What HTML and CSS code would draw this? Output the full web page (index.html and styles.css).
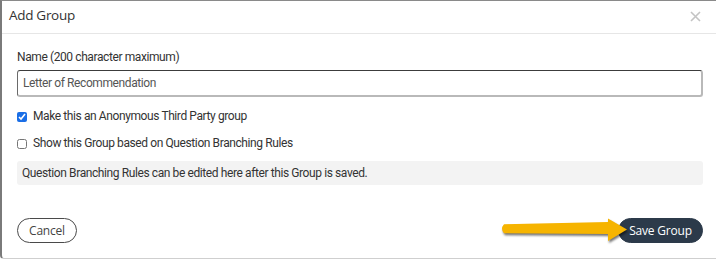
FILE: index.html
```html
<!DOCTYPE html>
<html lang="en">
<head>
<meta charset="utf-8">
<title>Add Group</title>
<link rel="stylesheet" href="styles.css">
</head>
<body>
<div class="modal">
  <div class="modal-header">
    <h1 class="modal-title">Add Group</h1>
    <button class="close-btn" aria-label="Close">
      <svg width="11" height="11" viewBox="0 0 11 11"><path d="M1 1L10 10M10 1L1 10" stroke="#c4c4c4" stroke-width="1.6" fill="none"/></svg>
    </button>
  </div>
  <div class="modal-body">
    <label class="field-label" for="name">Name (200 character maximum)</label>
    <input id="name" class="text-input" type="text" value="Letter of Recommendation">
    <label class="check-row"><input type="checkbox" class="check" checked> Make this an Anonymous Third Party group</label>
    <label class="check-row second"><input type="checkbox" class="check"> Show this Group based on Question Branching Rules</label>
    <div class="info-box">Question Branching Rules can be edited here after this Group is saved.</div>
  </div>
  <div class="modal-footer">
    <button class="btn btn-cancel">Cancel</button>
    <button class="btn btn-save">Save Group</button>
    <svg class="arrow" width="132" height="30" viewBox="0 0 132 30">
      <path d="M4 7.2 L108 5 L108 1.5 L127 12.5 L108 24 L108 17 L4 16.2 Q0 11.7 4 7.2 Z" fill="#f6b400"/>
    </svg>
  </div>
</div>
</body>
</html>
```

FILE: styles.css
```css
html, body {
  margin: 0;
  padding: 0;
  background: #ffffff;
}

body {
  font-family: Roboto, "Liberation Sans", Arial, sans-serif;
  color: #333;
}

.modal {
  height: 257px;
  border-top: 1px solid #8a8a8a;
  border-left: 2px solid #7a7a7a;
  border-bottom: 1px solid #cfcfcf;
  border-bottom-left-radius: 4px;
  background: #fff;
  display: flex;
  flex-direction: column;
}

.modal-header {
  height: 32px;
  border-bottom: 1px solid #e6e6e6;
  display: flex;
  align-items: center;
  justify-content: space-between;
  padding: 0 15px 0 7px;
}

.modal-title {
  margin: 0;
  font-family: "Open Sans", "DejaVu Sans", sans-serif;
  font-weight: 400;
  font-size: 13.5px;
  letter-spacing: -0.3px;
  color: #333;
  line-height: 20px;
  padding-bottom: 4px;
}

.close-btn {
  border: 0;
  background: none;
  padding: 0;
  margin-bottom: 2px;
  display: flex;
}

.modal-body {
  padding: 16px 13px 0 15px;
  display: flex;
  flex-direction: column;
  font-size: 12px;
  letter-spacing: -0.4px;
}

.field-label {
  line-height: 15px;
  color: #333;
}

.text-input {
  margin-top: 5px;
  height: 27px;
  box-sizing: border-box;
  border-top: 1px solid #3c3c3c;
  border-left: 1px solid #6a6a6a;
  border-right: 2px solid #b9b9b9;
  border-bottom: 2px solid #b9b9b9;
  border-radius: 3px;
  padding: 0 5px;
  font-family: Roboto, "Liberation Sans", Arial, sans-serif;
  font-size: 12px;
  letter-spacing: -0.4px;
  color: #555;
  outline: none;
}

.check-row {
  margin-top: 12px;
  display: flex;
  align-items: center;
  line-height: 15px;
  color: #333;
}

.check-row.second {
  margin-top: 12px;
}

.check {
  width: 10px;
  height: 10px;
  margin: 0 6px 0 0;
  accent-color: #1a6ee6;
}

.info-box {
  margin-top: 10px;
  height: 24px;
  line-height: 24px;
  background: #f3f3f3;
  border-radius: 3px;
  padding: 0 5px;
  color: #333;
}

.modal-footer {
  margin-top: auto;
  padding: 0 13px 15px 15px;
  display: flex;
  justify-content: space-between;
  align-items: center;
  position: relative;
}

.btn {
  height: 25px;
  border-radius: 13px;
  font-family: "Open Sans", "DejaVu Sans", sans-serif;
  font-size: 12px;
  letter-spacing: -0.2px;
  padding: 0;
  line-height: 23px;
  white-space: nowrap;
  cursor: pointer;
}

.btn-cancel {
  width: 60px;
  background: #fff;
  border: 1px solid #4a4a4a;
  color: #444;
}

.btn-save {
  width: 85px;
  background: #2c3a4a;
  border: 1px solid #2c3a4a;
  color: #fff;
}

.arrow {
  position: absolute;
  left: 498px;
  top: -1px;
  filter: drop-shadow(1px 2px 1px rgba(0, 0, 0, 0.55));
}
```
